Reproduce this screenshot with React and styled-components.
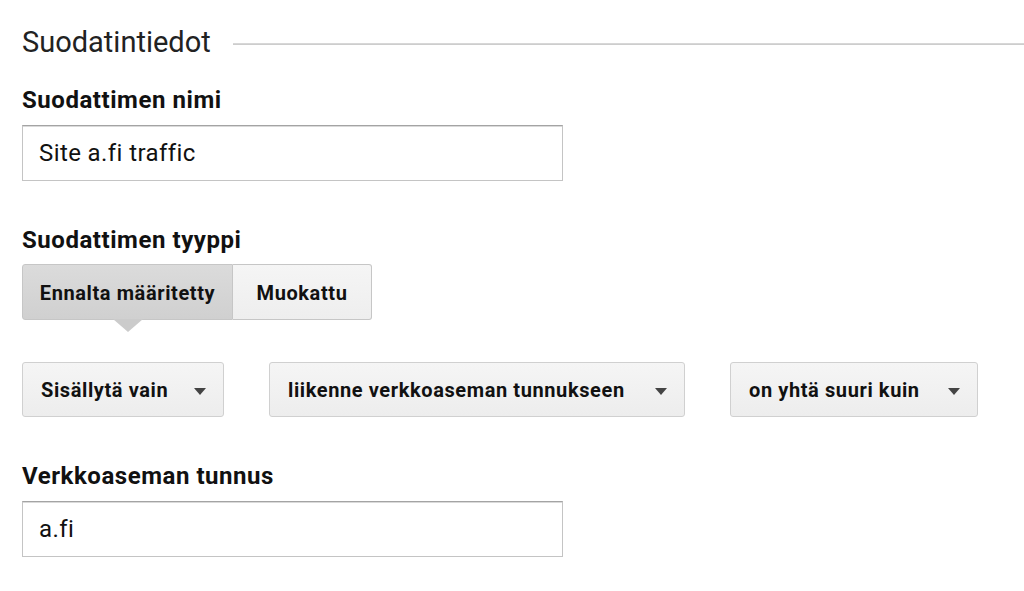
import React from "react";
import styled, { createGlobalStyle } from "styled-components";

const Global = createGlobalStyle`
  html, body { margin: 0; padding: 0; background: #fff; }
  body { font-family: Roboto, "Liberation Sans", Arial, sans-serif; color: #222; }
`;

const Page = styled.div`
  padding: 22px 0 0 22px;
  width: 1024px;
  box-sizing: border-box;
`;

const Legend = styled.div`
  display: flex;
  align-items: center;
  gap: 22px;
  font-size: 29px;
  line-height: 40px;
  color: #222;
`;

const Rule = styled.div`
  flex: 1;
  height: 2px;
  background: linear-gradient(#dcdcdc, #c8c8c8);
  margin-top: 4px;
`;

const Label = styled.div`
  font-size: 24px;
  font-weight: 700;
  letter-spacing: 0.55px;
  line-height: 28px;
  color: #111;
  margin-top: ${(p) => p.$mt}px;
`;

const TextInput = styled.div`
  width: 541px;
  height: 56px;
  box-sizing: border-box;
  margin-top: 11px;
  border: 1px solid #c4c4c4;
  border-top-color: #a4a4a4;
  box-shadow: inset 0 1px 0 #dadada;
  padding: 0 16px;
  display: flex;
  align-items: center;
  font-size: 24px;
  letter-spacing: 0.4px;
  line-height: 28px;
  color: #111;
`;

const Segmented = styled.div`
  display: flex;
  margin-top: 10px;
`;

const Segment = styled.div`
  position: relative;
  width: ${(p) => p.$w}px;
  height: 56px;
  box-sizing: border-box;
  display: flex;
  align-items: center;
  justify-content: center;
  padding-top: 2px;
  font-size: 20px;
  font-weight: 700;
  letter-spacing: 0.6px;
  color: #111;
  border: 1px solid #c6c6c6;
  background: ${(p) =>
    p.$active ? "linear-gradient(#dbdbdb, #d0d0d0)" : "linear-gradient(#f5f5f5, #eeeeee)"};
  border-radius: ${(p) => (p.$first ? "3px 0 0 3px" : "0 3px 3px 0")};
  ${(p) => (p.$first ? "" : "border-left: none;")}
`;

const Pointer = styled.span`
  position: absolute;
  left: 50%;
  top: 100%;
  margin-left: -15px;
  width: 0;
  height: 0;
  border-left: 15px solid transparent;
  border-right: 15px solid transparent;
  border-top: 13px solid #cbcbcb;
`;

const DropRow = styled.div`
  display: flex;
  gap: 45px;
  margin-top: 42px;
`;

const Drop = styled.div`
  width: ${(p) => p.$w}px;
  height: 55px;
  box-sizing: border-box;
  display: flex;
  align-items: center;
  justify-content: space-between;
  padding: 0 17px 0 18px;
  font-size: 20px;
  font-weight: 700;
  letter-spacing: 0.6px;
  color: #111;
  border: 1px solid #d0d0d0;
  border-radius: 3px;
  background: linear-gradient(#f5f5f5, #ededed);
`;

const Caret = styled.span`
  width: 0;
  height: 0;
  border-left: 6.5px solid transparent;
  border-right: 6.5px solid transparent;
  border-top: 7px solid #444;
  margin-top: 3px;
`;

export default function App() {
  return (
    <>
      <Global />
      <Page>
        <Legend>
          <span>Suodatintiedot</span>
          <Rule />
        </Legend>
        <Label $mt={24}>Suodattimen nimi</Label>
        <TextInput>Site a.fi traffic</TextInput>
        <Label $mt={45}>Suodattimen tyyppi</Label>
        <Segmented>
          <Segment $active $first $w={211}>
            Ennalta määritetty
            <Pointer />
          </Segment>
          <Segment $w={139}>Muokattu</Segment>
        </Segmented>
        <DropRow>
          <Drop $w={202}>
            <span>Sisällytä vain</span>
            <Caret />
          </Drop>
          <Drop $w={416}>
            <span>liikenne verkkoaseman tunnukseen</span>
            <Caret />
          </Drop>
          <Drop $w={248}>
            <span>on yhtä suuri kuin</span>
            <Caret />
          </Drop>
        </DropRow>
        <Label $mt={45}>Verkkoaseman tunnus</Label>
        <TextInput>a.fi</TextInput>
      </Page>
    </>
  );
}
